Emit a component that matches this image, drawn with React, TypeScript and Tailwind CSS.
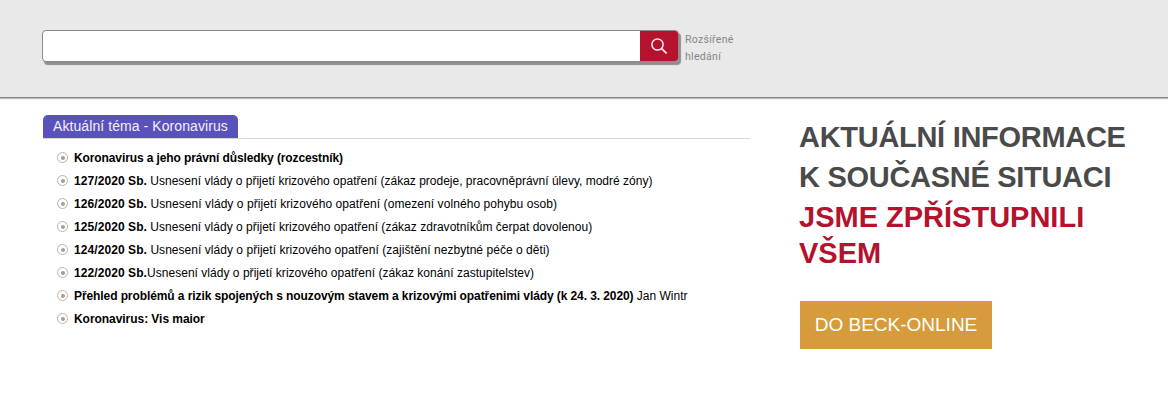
const items = [
  { bold: "Koronavirus a jeho právní důsledky (rozcestník)", rest: "", b: "tracking-[-0.11px]", r: "" },
  { bold: "127/2020 Sb.", rest: " Usnesení vlády o přijetí krizového opatření (zákaz prodeje, pracovněprávní úlevy, modré zóny)", b: "tracking-[0.08px]", r: "" },
  { bold: "126/2020 Sb.", rest: " Usnesení vlády o přijetí krizového opatření (omezení volného pohybu osob)", b: "tracking-[0.08px]", r: "tracking-[0.07px]" },
  { bold: "125/2020 Sb.", rest: " Usnesení vlády o přijetí krizového opatření (zákaz zdravotníkům čerpat dovolenou)", b: "tracking-[0.08px]", r: "tracking-[0.02px]" },
  { bold: "124/2020 Sb.", rest: " Usnesení vlády o přijetí krizového opatření (zajištění nezbytné péče o děti)", b: "tracking-[0.08px]", r: "tracking-[0.04px]" },
  { bold: "122/2020 Sb.", rest: "Usnesení vlády o přijetí krizového opatření (zákaz konání zastupitelstev)", b: "tracking-[0.08px]", r: "tracking-[0.03px]" },
  { bold: "Přehled problémů a rizik spojených s nouzovým stavem a krizovými opatřenimi vlády (k 24. 3. 2020)", rest: " Jan Wintr", b: "tracking-[-0.09px]", r: "" },
  { bold: "Koronavirus: Vis maior", rest: "", b: "tracking-[-0.05px]", r: "" },
];

function Bullet() {
  return (
    <span className="flex h-[11px] w-[11px] shrink-0 items-center justify-center rounded-full border-[1.5px] border-[#bcb2a7] bg-white">
      <span className="h-[4px] w-[4px] rounded-full bg-[#a89c8f]" />
    </span>
  );
}

export default function App() {
  return (
    <div className="h-[410px] w-[1168px] overflow-hidden bg-white font-['Liberation_Sans',Arial,sans-serif]">
      <div className="flex h-[98px] items-start border-b border-[#858585] bg-[#e9e9e9] pl-[42px] pt-[30px] shadow-[0_1px_1px_#bdbdbd]">
        <div className="flex h-[32px] w-[637px] overflow-hidden rounded-[4px] border border-[#8a8a8a] bg-white shadow-[2px_3px_1px_#8f8f8f]">
          <div className="flex-1" />
          <button className="flex w-[38px] items-center justify-center bg-[#b4122d]">
            <svg width="18" height="18" viewBox="0 0 18 18" fill="none" stroke="#f8e9ec" strokeWidth="1.5">
              <circle cx="7.5" cy="7.5" r="5.6" />
              <path d="M11.6 11.6l5 4.8" strokeWidth="1.8" />
            </svg>
          </button>
        </div>
        <div className="ml-[6px] mt-[1px] w-[60px] text-[10.5px] leading-[17px] text-[#868686] font-['Roboto',sans-serif] tracking-[0.3px]">
          Rozšířené hledání
        </div>
      </div>

      <div className="flex pl-[43px] pt-[17px]">
        <div className="w-[707px]">
          <div className="border-b border-[#d6d6d6]">
            <div className="flex h-[23px] w-[195px] items-center rounded-t-[5px] bg-[#5a52bb] pl-[10px] text-[14px] tracking-[0.08px] text-[#f1f0fa]">
              Aktuální téma - Koronavirus
            </div>
          </div>
          <ul className="mt-[7px] pl-[14px]">
            {items.map((item) => (
              <li key={item.bold} className="flex h-[23px] items-center gap-[6px] text-[12px] text-black">
                <Bullet />
                <p className="whitespace-nowrap">
                  <b className={item.b}>{item.bold}</b>
                  <span className={item.r}>{item.rest}</span>
                </p>
              </li>
            ))}
          </ul>
        </div>
        <div className="ml-[50px] w-[340px] pt-[2px]">
          <h2 className="ml-[-1px] text-[29px] font-bold leading-[40px] tracking-[-0.29px] text-[#4a4a4a]">
            AKTUÁLNÍ INFORMACE
            <br />K SOUČASNÉ SITUACI
          </h2>
          <h2 className="ml-[-1px] mt-[2px] text-[29px] font-bold leading-[36px] text-[#b4122d]">
            JSME ZPŘÍSTUPNILI
            <br />
            VŠEM
          </h2>
          <button className="mt-[30px] flex h-[48px] w-[192px] items-center justify-center bg-[#d69c3c] text-[19px] text-white">
            DO BECK-ONLINE
          </button>
        </div>
      </div>
    </div>
  );
}
